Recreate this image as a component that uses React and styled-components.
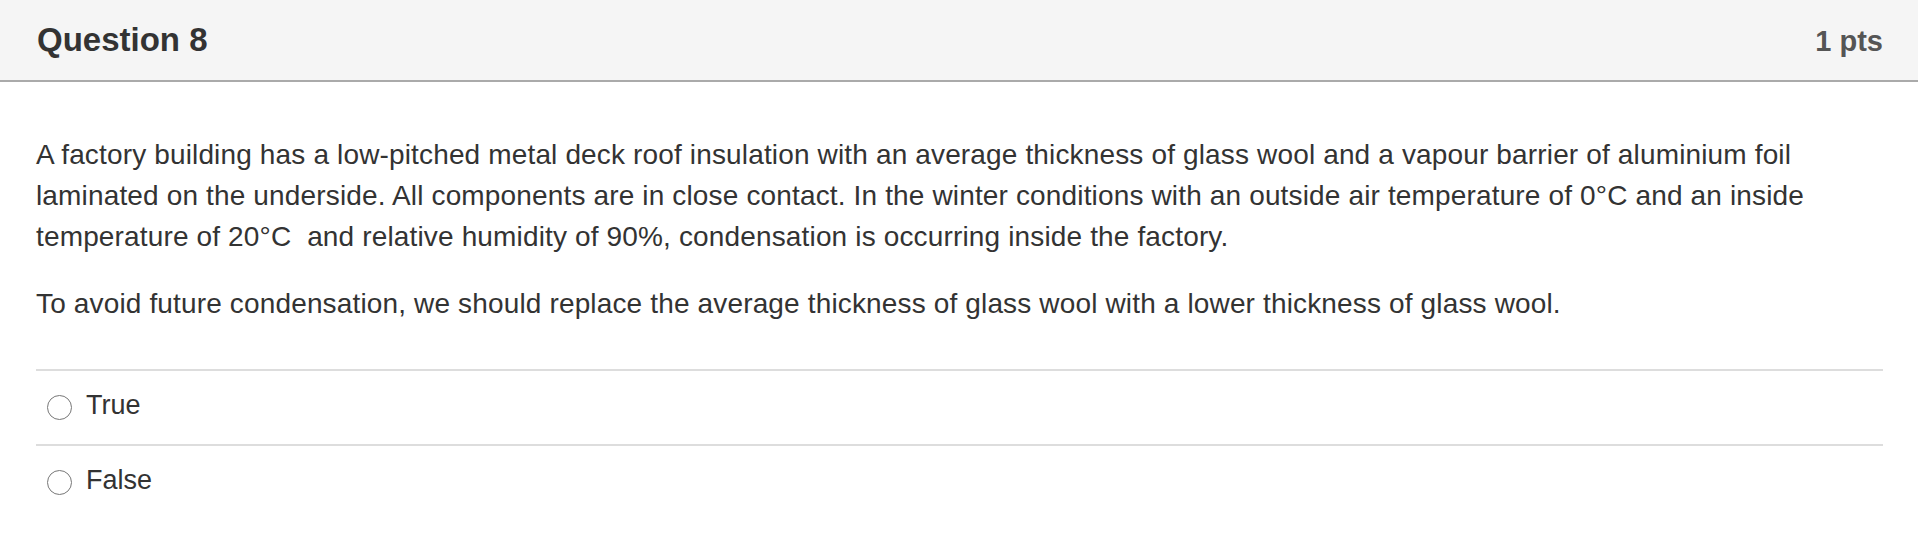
import React from "react";
import styled, { createGlobalStyle } from "styled-components";

const Global = createGlobalStyle`
  html, body { margin: 0; padding: 0; background: #fff; }
  body { font-family: "Liberation Sans", Arial, Helvetica, sans-serif; color: #333; }
`;

const Card = styled.div`
  width: 100%;
`;

const Header = styled.div`
  box-sizing: border-box;
  height: 82px;
  padding: 21px 35px 0 37px;
  background: #f5f5f5;
  border-bottom: 2px solid #aaa;
  display: flex;
  justify-content: space-between;
  align-items: baseline;
`;

const Title = styled.h2`
  margin: 0;
  font-size: 33px;
  font-weight: 700;
  color: #333;
  line-height: 38px;
`;

const Points = styled.span`
  font-size: 29px;
  font-weight: 700;
  color: #555;
`;

const Body = styled.div`
  padding: 52px 35px 0 36px;
`;

const Para = styled.p`
  margin: 0 0 ${(p) => p.$gap || 0}px;
  font-size: 28px;
  letter-spacing: 0.15px;
  line-height: 41px;
  color: #333;
`;

const Answers = styled.div`
  margin-top: 45px;
`;

const Row = styled.label`
  display: flex;
  align-items: center;
  border-top: 2px solid #ddd;
  padding: 14px 0 18px 11px;
  font-size: 27px;
  line-height: 41px;
  color: #333;
`;

const Radio = styled.span`
  box-sizing: border-box;
  width: 25px;
  height: 25px;
  border-radius: 50%;
  border: 1.6px solid #777;
  background: #fff;
  margin-top: 4px;
  margin-right: 14px;
  flex: none;
`;

export default function App() {
  return (
    <Card>
      <Global />
      <Header>
        <Title>Question 8</Title>
        <Points>1 pts</Points>
      </Header>
      <Body>
        <Para $gap={26}>
          A factory building has a low-pitched metal deck roof insulation with an average thickness of glass wool and a vapour barrier of aluminium foil laminated on the underside. All components are in close contact. In the winter conditions with an outside air temperature of 0°C and an inside temperature of 20°C&nbsp; and relative humidity of 90%, condensation is occurring inside the factory.
        </Para>
        <Para>
          To avoid future condensation, we should replace the average thickness of glass wool with a lower thickness of glass wool.
        </Para>
        <Answers>
          <Row>
            <Radio />
            True
          </Row>
          <Row>
            <Radio />
            False
          </Row>
        </Answers>
      </Body>
    </Card>
  );
}
